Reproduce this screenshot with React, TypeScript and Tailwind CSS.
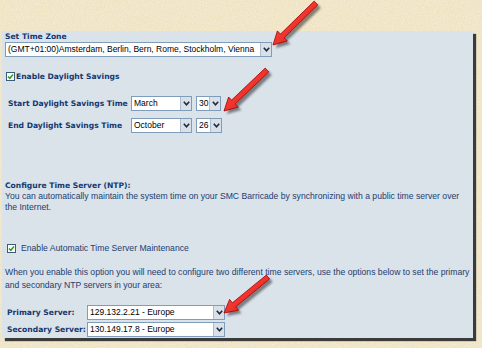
import React from 'react';

const label = "font-['DejaVu_Sans',Verdana,sans-serif] font-bold text-[7.6px] leading-[9px] text-[#15386e] whitespace-nowrap";
const body = "font-['Liberation_Sans',Arial,sans-serif] text-[8.65px] leading-[11px] text-[#1d3e6f]";

const Chevron = () => (
    <svg width="7" height="5" viewBox="0 0 7 5">
        <path d="M0.8 0.8 L3.5 3.8 L6.2 0.8" fill="none" stroke="#1c2a3a" strokeWidth="1.6" />
    </svg>
);

const Select = ({ value, width }: { value: string; width: string }) => (
    <div className={`flex h-[15px] ${width} border border-[#7f9db9] bg-white`}>
        <div className="flex-1 flex items-center pl-[2px] font-['Liberation_Sans',Arial,sans-serif] text-[8.5px] text-black whitespace-nowrap overflow-hidden">
            {value}
        </div>
        <div className="w-[11px] flex items-center justify-center bg-[#d9e0ea] border-l border-[#aebdd0]">
            <Chevron />
        </div>
    </div>
);

const CheckBox = () => (
    <div className="w-[9px] h-[9px] border border-[#3f5a7a] bg-white flex items-center justify-center">
        <svg width="7" height="7" viewBox="0 0 7 7">
            <path d="M1 3.5 L2.8 5.3 L6 1.5" fill="none" stroke="#21a121" strokeWidth="1.5" />
        </svg>
    </div>
);

// red pointer arrow with a drop shadow
const Arrow = ({ x1, y1, x2, y2 }: { x1: number; y1: number; x2: number; y2: number }) => {
    const dx = x2 - x1;
    const dy = y2 - y1;
    const len = Math.hypot(dx, dy);
    const ux = dx / len;
    const uy = dy / len;
    const px = -uy;
    const py = ux;
    const head = 13;
    const hw = 7;
    const sw = 2.6;
    const bx = x2 - ux * head;
    const by = y2 - uy * head;
    const pts = [
        [x1 + px * sw, y1 + py * sw],
        [bx + px * sw, by + py * sw],
        [bx + px * hw, by + py * hw],
        [x2, y2],
        [bx - px * hw, by - py * hw],
        [bx - px * sw, by - py * sw],
        [x1 - px * sw, y1 - py * sw],
    ]
        .map(p => p.map(n => n.toFixed(1)).join(','))
        .join(' ');
    return (
        <g>
            <polygon points={pts} fill="#2b2b2b" opacity="0.55" transform="translate(3,3)" filter="url(#blur)" />
            <polygon points={pts} fill="url(#red)" stroke="#a30000" strokeWidth="0.8" strokeLinejoin="round" />
        </g>
    );
};

export default function App() {
    return (
        <div className="relative w-[482px] h-[348px] overflow-hidden bg-[#efe3c2]">
            {/* paper texture behind the panel */}
            <svg className="absolute inset-0" width="482" height="348">
                <filter id="grain">
                    <feTurbulence type="fractalNoise" baseFrequency="0.9" numOctaves="2" seed="4" />
                    <feColorMatrix type="matrix" values="0 0 0 0 1  0 0 0 0 1  0 0 0 0 1  0 0 0 1.4 -0.55" />
                </filter>
                <rect width="482" height="348" filter="url(#grain)" opacity="0.6" />
            </svg>

            <div className="relative ml-[2px] mt-[31px] w-[471px] h-[307px] bg-[#dae2ea] shadow-[3px_3px_1px_#3b3b3b] px-[3px] pt-[1px]">
                <div className={label}>Set Time Zone</div>
                <div className="mt-[1px]">
                    <Select value="(GMT+01:00)Amsterdam, Berlin, Bern, Rome, Stockholm, Vienna" width="w-[267px]" />
                </div>

                <div className="mt-[15px] flex items-center gap-[1px] pl-[1px]">
                    <CheckBox />
                    <span className={label}>Enable Daylight Savings</span>
                </div>

                <div className="mt-[15px] flex items-center pl-[3px]">
                    <span className={`${label} w-[123px]`}>Start Daylight Savings Time</span>
                    <Select value="March" width="w-[61px]" />
                    <div className="ml-[4px]">
                        <Select value="30" width="w-[25px]" />
                    </div>
                </div>
                <div className="mt-[7px] flex items-center pl-[3px]">
                    <span className={`${label} w-[123px]`}>End Daylight Savings Time</span>
                    <Select value="October" width="w-[61px]" />
                    <div className="ml-[4px]">
                        <Select value="26" width="w-[26px]" />
                    </div>
                </div>

                <div className={`${label} mt-[48px]`}>Configure Time Server (NTP):</div>
                <p className={`${body} mt-[1px] w-[466px]`}>
                    You can automatically maintain the system time on your SMC Barricade by synchronizing with a public time server over the Internet.
                </p>

                <div className="mt-[30px] flex items-center gap-[5px] pl-[2px]">
                    <CheckBox />
                    <span className={body}>Enable Automatic Time Server Maintenance</span>
                </div>

                <p className={`${body} mt-[12px] w-[475px] leading-[13px]`}>
                    When you enable this option you will need to configure two different time servers, use the options below to set the primary and secondary NTP servers in your area:
                </p>

                <div className="mt-[13px] flex items-center pl-[2px]">
                    <span className={`${label} w-[80px]`}>Primary Server:</span>
                    <Select value="129.132.2.21 - Europe" width="w-[138px]" />
                </div>
                <div className="mt-[2px] flex items-center pl-[2px]">
                    <span className={`${label} w-[80px]`}>Secondary Server:</span>
                    <Select value="130.149.17.8 - Europe" width="w-[138px]" />
                </div>
            </div>

            <svg className="absolute inset-0 pointer-events-none" width="482" height="348">
                <defs>
                    <linearGradient id="red" x1="0" y1="0" x2="1" y2="1">
                        <stop offset="0" stopColor="#ff5a4a" />
                        <stop offset="1" stopColor="#e01010" />
                    </linearGradient>
                    <filter id="blur">
                        <feGaussianBlur stdDeviation="1" />
                    </filter>
                </defs>
                <Arrow x1={316} y1={3} x2={273} y2={45} />
                <Arrow x1={267} y1={70} x2={224} y2={111} />
                <Arrow x1={268} y1={277} x2={224} y2={313} />
            </svg>
        </div>
    );
}
